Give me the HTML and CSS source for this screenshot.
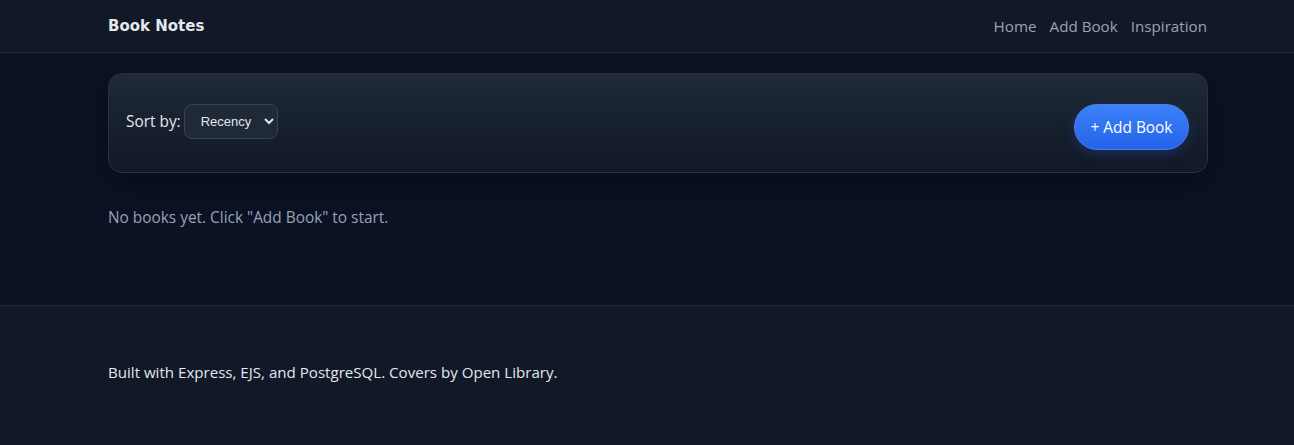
FILE: index.html
```html
<!DOCTYPE html>
<html lang="en">
<head>
<meta charset="utf-8">
<title>Book Notes</title>
<link rel="stylesheet" href="styles.css">
</head>
<body>
<header class="site-header">
  <div class="container header-inner">
    <a class="brand" href="#">Book Notes</a>
    <nav class="nav">
      <a href="#">Home</a>
      <a href="#">Add Book</a>
      <a href="#">Inspiration</a>
    </nav>
  </div>
</header>
<main class="container main">
  <section class="toolbar">
    <form class="sort-form">
      <label class="sort-label" for="sort">Sort by:</label>
      <select id="sort" class="sort-select">
        <option>Recency</option>
        <option>Rating</option>
        <option>Title</option>
      </select>
    </form>
    <a class="btn-add" href="#">+ Add Book</a>
  </section>
  <p class="empty">No books yet. Click "Add Book" to start.</p>
</main>
<footer class="site-footer">
  <div class="container">
    <p class="footer-text">Built with Express, EJS, and PostgreSQL. Covers by Open Library.</p>
  </div>
</footer>
</body>
</html>
```
FILE: styles.css
```css
* { box-sizing: border-box; }
html, body { margin: 0; padding: 0; }
body {
  background: #0c1224;
  color: #e5e7eb;
  font-family: "Open Sans", "Noto Sans", sans-serif;
  font-size: 15.4px;
  min-height: 445px;
  display: flex;
  flex-direction: column;
}
.container {
  width: 1100px;
  margin-left: 108px;
}
.site-header {
  background: #111827;
  border-bottom: 1px solid #1e293b;
  height: 53px;
}
.header-inner {
  height: 52px;
  display: flex;
  align-items: center;
  justify-content: space-between;
}
.brand {
  font-family: "DejaVu Sans", sans-serif;
  font-weight: 700;
  font-size: 15px;
  color: #e5e7eb;
  text-decoration: none;
}
.nav { display: flex; gap: 13px; margin-right: 1px; }
.nav a {
  color: #9ca3af;
  text-decoration: none;
  font-size: 15.2px;
}
.main {
  padding-top: 20px;
  padding-bottom: 77px;
}
.toolbar {
  display: flex;
  justify-content: space-between;
  align-items: flex-start;
  padding: 30px 18px 22px 17px;
  border: 1px solid #273244;
  border-radius: 14px;
  background: linear-gradient(180deg, #1f2937 0%, #111827 100%);
  box-shadow: 0 10px 30px rgba(0,0,0,0.35);
}
.sort-form {
  display: flex;
  align-items: center;
  gap: 3px;
}
.sort-label { color: #e5e7eb; font-size: 15.4px; }
.sort-select {
  height: 35px;
  width: 94px;
  padding: 0 8px 0 12px;
  border: 1px solid #374151;
  border-radius: 8px;
  background: #1f2937;
  color: #e5e7eb;
  font-family: "Liberation Sans", Arial, sans-serif;
  font-size: 13px;
}
.btn-add {
  display: inline-flex;
  align-items: center;
  justify-content: center;
  height: 46px;
  width: 115px;
  border-radius: 999px;
  background: linear-gradient(180deg, #3b82f6 0%, #2563eb 100%);
  border: 1px solid #4f7fe6;
  color: #ffffff;
  text-decoration: none;
  font-size: 15.4px;
  box-shadow: 0 4px 12px rgba(37,99,235,0.25);
}
.empty {
  margin: 34px 0 0;
  color: #94a3b8;
}
.site-footer {
  flex: 1;
  background: #111827;
  border-top: 1px solid #1e293b;
  padding-top: 56px;
}
.footer-text {
  margin: 0;
  color: #e5e7eb;
  font-size: 15.1px;
}
```
